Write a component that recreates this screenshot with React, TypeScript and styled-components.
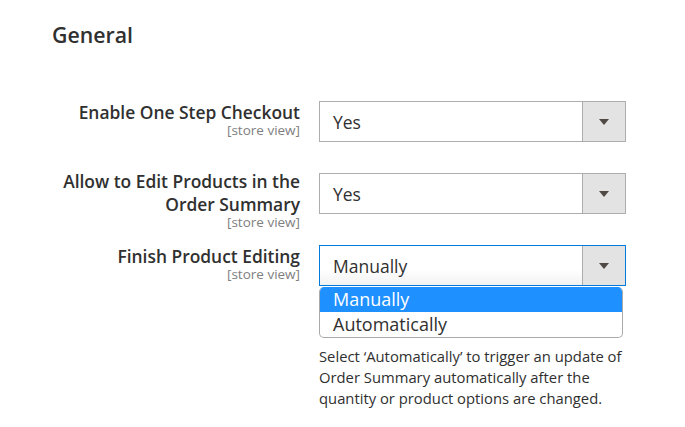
import React from 'react';
import styled, { createGlobalStyle } from 'styled-components';

const GlobalStyle = createGlobalStyle`
    body {
        margin: 0;
        background: #fff;
        font-family: 'Open Sans', 'Liberation Sans', sans-serif;
        color: #303030;
    }
`;

const Page = styled.div`
    padding: 23px 0 0 52px;
`;

const Title = styled.h2`
    margin: 0 0 54px;
    font-size: 21.3px;
    line-height: 24px;
    font-weight: 600;
    color: #303030;
`;

const Row = styled.div`
    display: grid;
    grid-template-columns: 248px 307px;
    column-gap: 19px;
    min-height: 72px;
    align-items: start;
`;

const LabelCell: any = styled.div`
    text-align: right;
    margin-top: ${(p: any) => p.$top}px;
`;

const LabelText = styled.div`
    font-size: 17.4px;
    line-height: 23px;
    font-weight: 600;
    color: #303030;
`;

const Scope = styled.div`
    font-size: 13.5px;
    line-height: 12px;
    color: #808080;
`;

const Control = styled.div`
    position: relative;
`;

const SelectBox: any = styled.div`
    box-sizing: border-box;
    height: 41px;
    display: flex;
    align-items: stretch;
    border: 1px solid ${(p: any) => (p.$focused ? '#007bdb' : '#adadad')};
    background: ${(p: any) =>
        p.$focused ? 'linear-gradient(#fff 60%, #f2f2f2)' : '#fff'};
`;

const SelectValue = styled.div`
    flex: 1;
    display: flex;
    align-items: center;
    padding-left: 13px;
    font-size: 17.5px;
    color: #303030;
`;

const ArrowButton = styled.div`
    width: 42px;
    border-left: 1px solid #adadad;
    background: #e3e3e3;
    display: flex;
    align-items: center;
    justify-content: center;
`;

const Arrow = styled.span`
    width: 0;
    height: 0;
    border-left: 5px solid transparent;
    border-right: 5px solid transparent;
    border-top: 6px solid #514943;
    margin-top: 1px;
`;

const OptionList = styled.ul`
    position: absolute;
    top: 42px;
    left: 0;
    width: 304px;
    margin: 0;
    padding: 0;
    list-style: none;
    box-sizing: border-box;
    border: 1px solid #a9a9a9;
    border-top: none;
    border-radius: 5px;
    overflow: hidden;
    background: #fff;
`;

const Option: any = styled.li`
    height: 25px;
    line-height: 25px;
    padding-left: 13px;
    font-size: 18px;
    color: ${(p: any) => (p.$active ? '#fff' : '#303030')};
    background: ${(p: any) => (p.$active ? '#1e90ff' : 'transparent')};
`;

const Note = styled.p`
    margin: 60px 0 0;
    font-size: 14.8px;
    line-height: 21px;
    color: #303030;
`;

const Select = ({ value, focused }: { value: string; focused?: boolean }) => (
    <SelectBox $focused={focused}>
        <SelectValue>{value}</SelectValue>
        <ArrowButton>
            <Arrow />
        </ArrowButton>
    </SelectBox>
);

const App = () => {
    return (
        <>
            <GlobalStyle />
            <Page>
                <Title>General</Title>
                <Row>
                    <LabelCell $top={0}>
                        <LabelText>Enable One Step Checkout</LabelText>
                        <Scope>[store view]</Scope>
                    </LabelCell>
                    <Control>
                        <Select value='Yes' />
                    </Control>
                </Row>
                <Row>
                    <LabelCell $top={-3}>
                        <LabelText>Allow to Edit Products in the Order Summary</LabelText>
                        <Scope>[store view]</Scope>
                    </LabelCell>
                    <Control>
                        <Select value='Yes' />
                    </Control>
                </Row>
                <Row>
                    <LabelCell $top={0}>
                        <LabelText>Finish Product Editing</LabelText>
                        <Scope>[store view]</Scope>
                    </LabelCell>
                    <Control>
                        <Select value='Manually' focused />
                        <OptionList>
                            <Option $active>Manually</Option>
                            <Option>Automatically</Option>
                        </OptionList>
                        <Note>
                            Select ‘Automatically’ to trigger an update of Order Summary
                            automatically after the quantity or product options are changed.
                        </Note>
                    </Control>
                </Row>
            </Page>
        </>
    );
};

export default App;
